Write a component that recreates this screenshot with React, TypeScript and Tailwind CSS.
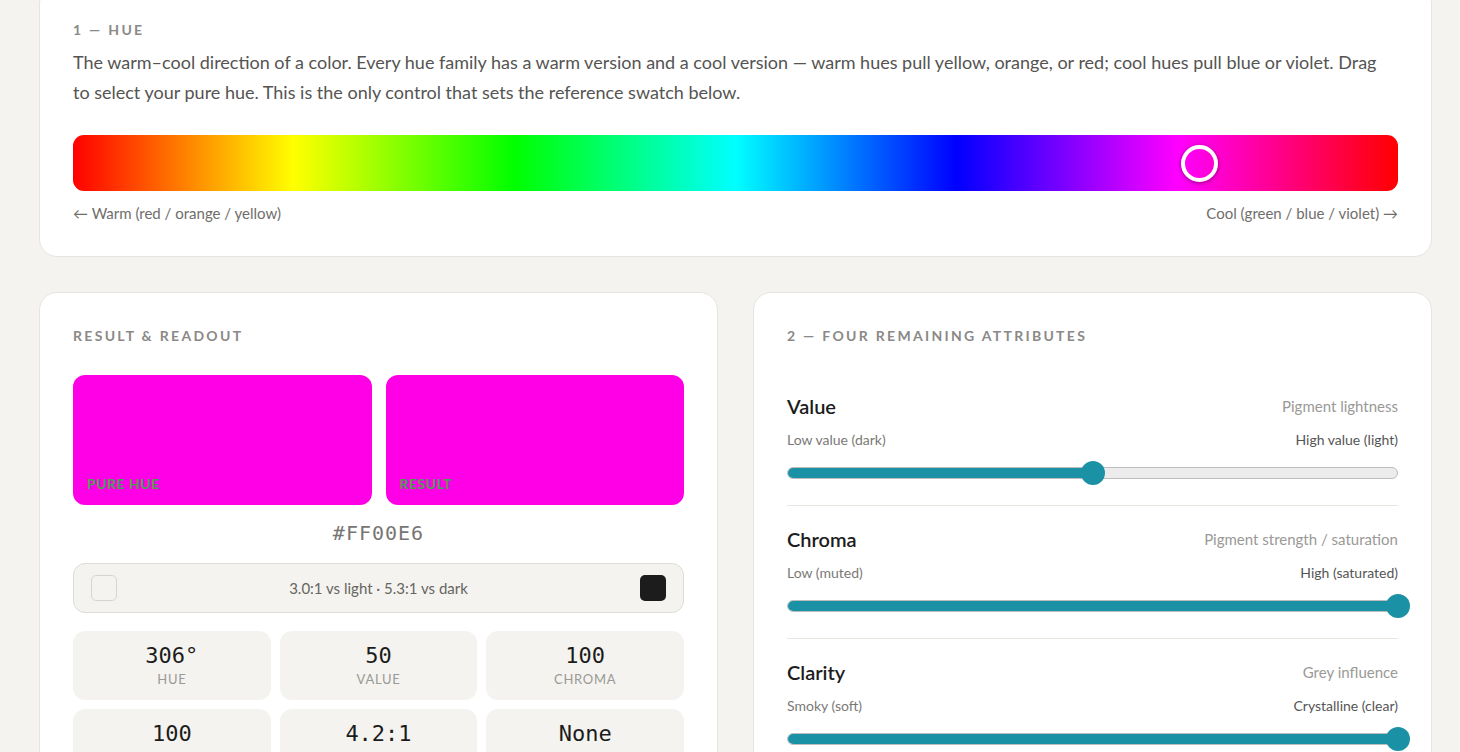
import React from "react";

const sans = { fontFamily: "Lato, 'Noto Sans', sans-serif" } as const;
const mono = { fontFamily: "'DejaVu Sans Mono', 'Liberation Mono', monospace" } as const;

function SectionLabel({ children }: { children: React.ReactNode }) {
  return (
    <div className="text-[14px] leading-[20px] font-bold tracking-[2.3px] uppercase text-[#8a8987]">
      {children}
    </div>
  );
}

function Slider({
  title,
  hint,
  low,
  high,
  pct,
  last,
}: {
  title: string;
  hint: string;
  low: string;
  high: string;
  pct: number;
  last?: boolean;
}) {
  return (
    <div className={`pt-[19px] pb-[20px] ${last ? "" : "border-b border-[#e8e6e1]"}`}>
      <div className="flex items-center justify-between h-[28px]">
        <span className="text-[20px] font-semibold text-[#1c1c1c]">{title}</span>
        <span className="text-[15px] text-[#9a9996]">{hint}</span>
      </div>
      <div className="mt-[10px] flex items-center justify-between h-[18px] text-[14px]">
        <span className="text-[#7a7976]">{low}</span>
        <span className="text-[#555]">{high}</span>
      </div>
      <div className="mt-[13px] h-[24px] relative flex items-center">
        <div className="w-full h-[12px] rounded-full bg-[#ececec] border border-[#bdbdbd] overflow-hidden">
          <div className="h-full bg-[#1b91a5]" style={{ width: `${pct}%` }} />
        </div>
        <div
          className="absolute top-0 w-[24px] h-[24px] rounded-full bg-[#1b91a5]"
          style={{ left: `calc(${pct}% - 12px)` }}
        />
      </div>
    </div>
  );
}

function Stat({ value, label }: { value: string; label: string }) {
  return (
    <div className="bg-[#f4f3ef] rounded-[12px] h-[69px] flex flex-col items-center justify-center pb-[3px]">
      <div className="text-[22px] leading-[28px] text-[#1c1c1c]" style={mono}>
        {value}
      </div>
      <div className="text-[13px] leading-[16px] tracking-[0.7px] text-[#9a9996] mt-[1px]">{label}</div>
    </div>
  );
}

export default function App() {
  const huePct = (306 / 360) * 100;
  return (
    <div className="min-h-screen bg-[#f4f3ef] pl-[39px] pr-[28px] pb-[40px] overflow-hidden" style={sans}>
      {/* Top hue card */}
      <div className="-mt-[14px] bg-white border border-[#e6e4df] rounded-[18px] p-[33px]">
        <SectionLabel>1 — Hue</SectionLabel>
        <p className="mt-[7px] pr-[12px] text-[18px] leading-[30px] text-[#555452]">
          The warm–cool direction of a color. Every hue family has a warm version and a cool version — warm hues pull
          yellow, orange, or red; cool hues pull blue or violet. Drag to select your pure hue. This is the only control
          that sets the reference swatch below.
        </p>
        <div
          className="mt-[28px] h-[56px] rounded-[11px] relative"
          style={{
            background:
              "linear-gradient(to right, #ff0000 0%, #ffff00 16.67%, #00ff00 33.33%, #00ffff 50%, #0000ff 66.67%, #ff00ff 83.33%, #ff0000 100%)",
          }}
        >
          <div
            className="absolute top-[10px] w-[37px] h-[37px] rounded-full border-[4px] border-white shadow-[0_1px_4px_rgba(0,0,0,0.45)]"
            style={{ left: `calc(${huePct}% - 18px)` }}
          />
        </div>
        <div className="mt-[12px] flex justify-between text-[15px] leading-[20px] text-[#6f6e6b]">
          <span>← Warm (red / orange / yellow)</span>
          <span>Cool (green / blue / violet) →</span>
        </div>
      </div>

      {/* Bottom row */}
      <div className="mt-[35px] grid grid-cols-2 gap-[35px]">
        <div className="bg-white border border-[#e6e4df] rounded-[18px] p-[33px]">
          <SectionLabel>Result &amp; Readout</SectionLabel>
          <div className="mt-[29px] grid grid-cols-2 gap-[14px]">
            <div className="h-[130px] rounded-[12px] bg-[#ff00e6] flex items-end px-[14px] pb-[11px]">
              <span className="text-[14px] font-bold tracking-[0.5px] uppercase text-[#45a052]">Pure Hue</span>
            </div>
            <div className="h-[130px] rounded-[12px] bg-[#ff00e6] flex items-end px-[14px] pb-[11px]">
              <span className="text-[14px] font-bold tracking-[0.5px] uppercase text-[#45a052]">Result</span>
            </div>
          </div>
          <div className="mt-[14px] text-center text-[20px] leading-[28px] tracking-[1px] text-[#777674]" style={mono}>
            #FF00E6
          </div>
          <div className="mt-[16px] h-[50px] rounded-[12px] bg-[#f4f3ef] border border-[#dedcd6] flex items-center justify-between px-[17px]">
            <div className="w-[26px] h-[26px] rounded-[5px] bg-[#f4f3ef] border border-[#d6d4cf]" />
            <span className="text-[15px] text-[#66655f]">3.0:1 vs light · 5.3:1 vs dark</span>
            <div className="w-[26px] h-[26px] rounded-[5px] bg-[#1c1c1c]" />
          </div>
          <div className="mt-[18px] grid grid-cols-3 gap-[9px]">
            <Stat value="306°" label="HUE" />
            <Stat value="50" label="VALUE" />
            <Stat value="100" label="CHROMA" />
            <Stat value="100" label="CLARITY" />
            <Stat value="4.2:1" label="CONTRAST" />
            <Stat value="None" label="MODIFIER" />
          </div>
        </div>

        <div className="bg-white border border-[#e6e4df] rounded-[18px] p-[33px]">
          <SectionLabel>2 — Four Remaining Attributes</SectionLabel>
          <div className="mt-[27px]">
            <Slider title="Value" hint="Pigment lightness" low="Low value (dark)" high="High value (light)" pct={50} />
            <Slider
              title="Chroma"
              hint="Pigment strength / saturation"
              low="Low (muted)"
              high="High (saturated)"
              pct={100}
            />
            <Slider title="Clarity" hint="Grey influence" low="Smoky (soft)" high="Crystalline (clear)" pct={100} />
            <Slider title="Modifier" hint="Surface tone" low="None" high="Full" pct={0} last />
          </div>
        </div>
      </div>
    </div>
  );
}
